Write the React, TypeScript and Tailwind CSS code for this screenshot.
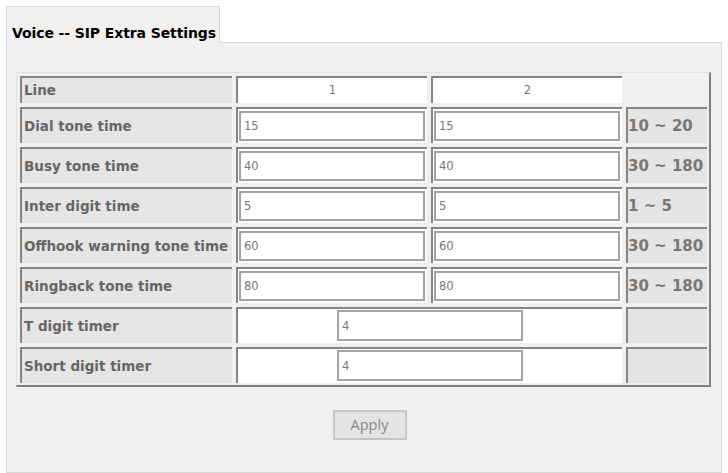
import React from 'react';

const rows = [
  { label: 'Dial tone time', v1: '15', v2: '15', range: '10 ~ 20' },
  { label: 'Busy tone time', v1: '40', v2: '40', range: '30 ~ 180' },
  { label: 'Inter digit time', v1: '5', v2: '5', range: '1 ~ 5' },
  { label: 'Offhook warning tone time', v1: '60', v2: '60', range: '30 ~ 180' },
  { label: 'Ringback tone time', v1: '80', v2: '80', range: '30 ~ 180' },
];

const timers = [
  { label: 'T digit timer', value: '4' },
  { label: 'Short digit timer', value: '4' },
];

const Label = ({ text }: { text: string }) => (
  <div className="flex items-center bg-[#e5e5e5] border-t-2 border-l-2 border-[#858585] pl-[2px] text-[13.5px] font-bold text-[#666] whitespace-nowrap overflow-hidden">
    {text}
  </div>
);

const Field = ({ value }: { value: string }) => (
  <input
    defaultValue={value}
    className="h-full w-full bg-white border-2 border-[#a3a3a3] px-[3px] text-[11.5px] text-[#777] outline-none font-['DejaVu_Sans',sans-serif]"
  />
);

const App: React.FC = () => {
  return (
    <div className="min-h-screen bg-white pt-[6px] px-[6px] font-['DejaVu_Sans',sans-serif]">
      {/* Tab */}
      <div className="relative z-10 -mb-px w-[214px] h-[37px] bg-[#f1f0ee] border border-b-0 border-[#d9d9d9] pl-[5px] pt-[14px]">
        <span className="text-[14px] font-bold text-black tracking-[-0.1px]">Voice -- SIP Extra Settings</span>
      </div>

      {/* Panel */}
      <div className="w-[716px] h-[431px] bg-[#f1f0ee] border border-[#d9d9d9] pt-[29px] pl-[9px]">
        {/* Settings table */}
        <div className="w-[695px] border-t border-l border-[#e2e2e2] border-r-2 border-b-2 border-r-[#808080] border-b-[#808080] pt-[3px] pl-[3px] pr-[2px] pb-[2px]">
          <div className="grid grid-cols-[212px_191px_191px_81px] grid-rows-[27px_repeat(7,36px)] gap-x-[4px] gap-y-[4px]">
            <Label text="Line" />
            <div className="flex items-center justify-center bg-white border-t-2 border-l-2 border-[#858585] text-[11.5px] text-[#777]">1</div>
            <div className="flex items-center justify-center bg-white border-t-2 border-l-2 border-[#858585] text-[11.5px] text-[#777]">2</div>
            <div />

            {rows.map((r) => (
              <React.Fragment key={r.label}>
                <Label text={r.label} />
                <div className="bg-white border-t-2 border-l-2 border-[#858585] pt-[2px] pb-[2px] pl-[1px] pr-[2px]">
                  <Field value={r.v1} />
                </div>
                <div className="bg-white border-t-2 border-l-2 border-[#858585] pt-[2px] pb-[2px] pl-[1px] pr-[2px]">
                  <Field value={r.v2} />
                </div>
                <div className="flex items-center bg-[#e4e4e4] border-t-2 border-l-2 border-[#858585] text-[15px] font-bold text-[#777] whitespace-nowrap overflow-hidden">
                  {r.range}
                </div>
              </React.Fragment>
            ))}

            {timers.map((t) => (
              <React.Fragment key={t.label}>
                <Label text={t.label} />
                <div className="col-span-2 flex justify-center bg-white border-t-2 border-l-2 border-[#858585] pt-[1px] pb-[2px]">
                  <div className="w-[186px] h-full">
                    <Field value={t.value} />
                  </div>
                </div>
                <div className="bg-[#e4e4e4] border-t-2 border-l-2 border-[#858585]" />
              </React.Fragment>
            ))}
          </div>
        </div>

        {/* Actions */}
        <div className="flex justify-center mt-[23px] pl-[2px]">
          <button className="w-[74px] h-[30px] bg-[#e4e4e4] border-2 border-[#c6c6c6] text-[14.5px] text-[#888] font-['Open_Sans',sans-serif]">
            Apply
          </button>
        </div>
      </div>
    </div>
  );
};

export default App;
